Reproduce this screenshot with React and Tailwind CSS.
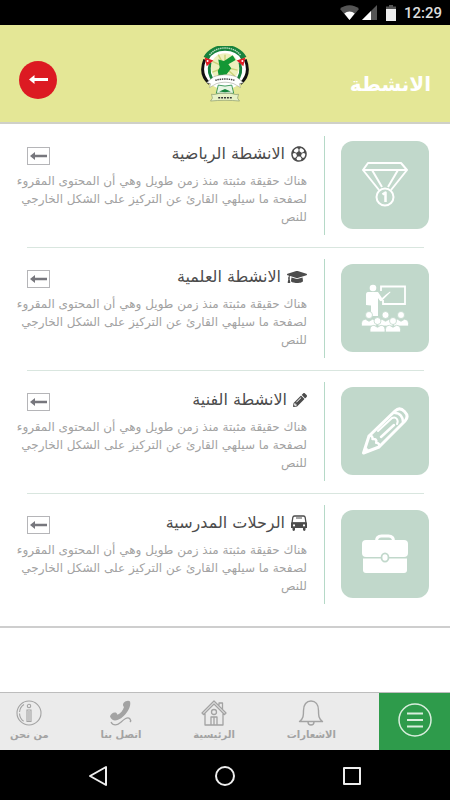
import React from "react";
import { FaRegFutbol, FaGraduationCap, FaPencilAlt } from "react-icons/fa";

function BusIcon() {
  return (
    <svg viewBox="0 0 16 16" className="h-4 w-4" fill="none" aria-hidden="true">
      <path d="M3.500 1h9c1 0 1.500.5 1.700 1.500L15 8H1l.8-5.500C2 1.500 2.500 1 3.500 1z" stroke="currentColor" strokeWidth="1.300" />
      <path d="M5 3h6" stroke="currentColor" strokeWidth="1" />
      <path
        fill="currentColor"
        fillRule="evenodd"
        d="M0 7.500h16V13h-1.500v1.600c0 .8-.5 1.300-1.200 1.300s-1.300-.5-1.300-1.300V13H4v1.600c0 .8-.5 1.300-1.300 1.300s-1.200-.5-1.200-1.300V13H0zM3 9.300a1.100 1.100 0 100 2.200 1.100 1.100 0 000-2.200zM13 9.300a1.100 1.100 0 100 2.200 1.100 1.100 0 000-2.200z"
      />
    </svg>
  );
}

function MedalIcon() {
  return (
    <svg viewBox="0 0 48 48" className="h-12 w-12" fill="none" stroke="currentColor" strokeWidth="2" strokeLinejoin="round" aria-hidden="true">
      <path d="M7 2h33l6 7H2zM2 9l16 20M46 9L30 29M11 9l10 17M37 9L27 26" />
      <circle cx="24" cy="36" r="8.500" />
      <path d="M21.500 33.500l3-2v9.500" strokeWidth="2.500" />
    </svg>
  );
}

function Person({ x, y }) {
  return (
    <g transform={`translate(${x} ${y})`}>
      <circle cx="0" cy="0" r="3.500" />
      <path d="M-7.500 11V8.500c0-2.500 1.500-4 4-4.200l3.500 2 3.500-2c2.500.2 4 1.700 4 4.200V11z" />
    </g>
  );
}

function ClassIcon() {
  return (
    <svg viewBox="0 0 48 48" className="h-12 w-12" fill="currentColor" aria-hidden="true">
      <path d="M20 7V2.500h24V20H22v-4" fill="none" stroke="currentColor" strokeWidth="1.800" />
      <circle cx="12" cy="4" r="3.300" />
      <path d="M7 8h10l4 6 4-3.500 4-3 .5.800-8.500 8.500c-.8.600-1.700.400-2.300-.300L17 14v18h-7V21.500l-5-.500V11c0-2 .700-3 2-3z" />
      <g stroke="#c1d8cb" strokeWidth=".8">
        <Person x={8} y={31} />
        <Person x={24.500} y={31} />
        <Person x={40} y={31} />
        <Person x={16.500} y={37} />
        <Person x={32} y={37} />
      </g>
    </svg>
  );
}

function PencilIcon() {
  return (
    <svg viewBox="0 0 48 48" className="h-12 w-12" fill="none" stroke="currentColor" strokeWidth="3" strokeLinecap="round" strokeLinejoin="round" aria-hidden="true">
      <path d="M2.500 46L8 29 34 4c3-2.800 6.500-2.500 9.500.500s3.300 6.500.500 9.500L18 40z" />
      <path d="M8 29c2-1 4 .500 3.500 3 3-.500 4.500 1 3.700 3.800 2.300 0 3.800 2 2.800 4.200M34 6c5 0 8 4 8 9" strokeWidth="2.500" />
      <path d="M20 30l13-12" strokeWidth="2.500" />
      <path d="M17 24l14-13c4-2 7 2 5 6" strokeWidth="2" />
      <path d="M2.500 46l2-6 4 4z" fill="currentColor" strokeWidth="1" />
    </svg>
  );
}

function BriefcaseIcon() {
  return (
    <svg viewBox="0 0 48 48" className="h-12 w-12" fill="currentColor" aria-hidden="true">
      <path d="M15.500 11c0-3.500 2-5 5-5h7c3 0 5 1.500 5 5" fill="none" stroke="currentColor" strokeWidth="3" />
      <path d="M5 10h38a4 4 0 014 4v9a4 4 0 01-4 4H5a4 4 0 01-4-4v-9a4 4 0 014-4z" />
      <path d="M2 28.500h44V40a3 3 0 01-3 3H5a3 3 0 01-3-3z" />
      <ellipse cx="24" cy="27.500" rx="3.500" ry="4.200" stroke="#c1d8cb" strokeWidth="1.800" />
    </svg>
  );
}

function Emblem() {
  return (
    <svg viewBox="0 0 48 58" className="h-14 w-12" role="img" aria-label="شعار المدرسة">
      <circle cx="24" cy="23" r="22" fill="#fff" />
      <path d="M3 14C-1 24 1 33 8 39" fill="none" stroke="#111" strokeWidth="3" />
      <path d="M45 14c4 10 2 19-5 25" fill="none" stroke="#111" strokeWidth="3" />
      <path d="M9 17C6 26 8 32 13 37M39 17c3 9 1 15-4 20" fill="none" stroke="#16823c" strokeWidth="3" />
      <path d="M4.500 12.500C12-1.500 36-1.500 43.500 12.500" fill="none" stroke="#16823c" strokeWidth="6" />
      <path d="M8 9.500C15-.5 33-.5 40 9.500" fill="none" stroke="#b9dcc0" strokeWidth="1.500" strokeDasharray="1.500 .7" />
      <circle cx="24" cy="22" r="14.500" fill="#eef0bd" />
      <path d="M24 22L11 16M24 22L17 9M24 22V9M24 22l13 3M24 22L11 27M24 22l10 9M24 22L15 33" stroke="#cbd47b" strokeWidth="1.500" />
      <path d="M3 12l9 3-7 6zM45 12l-9 3 7 6z" fill="#e11b23" />
      <circle cx="6" cy="15.500" r="1" fill="#fff" />
      <circle cx="42" cy="15.500" r="1" fill="#fff" />
      <path d="M17 14l6 1.500 9-6 3 5-7.500 4.500 3 4-5 6.500-8 1-1-4.500 2-4z" fill="#149735" />
      <path d="M5 38l7-6c8-3 16-3 24 0l7 6-4 1 1 4-7-4c-6-2-12-2-18 0l-7 4 1-4z" fill="#fff" stroke="#8b9184" strokeWidth=".5" />
      <path d="M14 35.500c6-1.700 14-1.700 20 0" fill="none" stroke="#444" strokeWidth="1.500" strokeDasharray="1.500 .8" />
      <path d="M17 40.500l7 1 7-1 2 8.500H15z" fill="#e8f5e4" stroke="#15843a" strokeWidth=".8" />
      <path d="M18 47l6-2.500 6 2.500-6 1z" fill="#15843a" />
      <path d="M10 50c4 1 6-1 9-1h10c3 0 5 2 9 1l-1 4 2 3c-9-1-21-1-30 0l2-3z" fill="#e7f2c7" stroke="#7c8d67" strokeWidth=".6" />
      <path d="M17 53.500h14" stroke="#333" strokeWidth="1.500" strokeDasharray="2 1" />
    </svg>
  );
}

const activities = [
  { title: "الانشطة الرياضية", Icon: () => <FaRegFutbol className="h-4 w-4" />, Picture: MedalIcon },
  { title: "الانشطة العلمية", Icon: () => <FaGraduationCap className="h-5 w-5" />, Picture: ClassIcon },
  { title: "الانشطة الفنية", Icon: () => <FaPencilAlt className="h-[14px] w-[14px]" />, Picture: PencilIcon },
  { title: "الرحلات المدرسية", Icon: BusIcon, Picture: BriefcaseIcon },
];

function Activity({ title, Icon, Picture }) {
  return (
    <article className="flex pt-3 pr-[21px] pb-3 pl-4">
      <div className="mt-[5px] flex h-[88px] w-[88px] shrink-0 items-center justify-center rounded-xl bg-[#c1d8cb] text-white">
        <Picture />
      </div>
      <div className="mr-4 h-[99px] w-px shrink-0 bg-[#b5d9c7]" />
      <div className="mr-[17px] min-w-0 flex-1">
        <div className="flex h-9 items-center justify-between pl-[11px]">
          <h2 className="flex items-center gap-[6px] text-base text-[#4c4c4c]">
            <Icon />
            {title}
          </h2>
          <button type="button" aria-label={title} className="mt-1 flex h-[18px] w-[23px] items-center justify-center border border-[#b5b5b8] text-[#77777d]">
            <svg viewBox="0 0 17 8" className="h-2 w-[17px]" fill="currentColor" aria-hidden="true">
              <path d="M0 4l5-4v2.800h12v2.400H5V8z" />
            </svg>
          </button>
        </div>
        <p className="text-xs leading-[18px] whitespace-nowrap text-[#a2a2a2]">
          هناك حقيقة مثبتة منذ زمن طويل وهي أن المحتوى المقروء
          <br />
          لصفحة ما سيلهي القارئ عن التركيز على الشكل الخارجي
          <br />
          للنص
        </p>
      </div>
    </article>
  );
}

function BellIcon() {
  return (
    <svg viewBox="0 0 26 26" className="h-[26px] w-[26px]" fill="none" stroke="currentColor" strokeWidth="1.400" strokeLinejoin="round" aria-hidden="true">
      <path d="M1.500 21.500c4-3 4-6 4-11 0-6 3-9.500 7.500-9.500s7.500 3.500 7.500 9.500c0 5 0 8 4 11zM10 22c0 4 6 4 6 0" />
    </svg>
  );
}

function HomeIcon() {
  return (
    <svg viewBox="0 0 26 26" className="h-[26px] w-[26px]" fill="none" stroke="currentColor" strokeWidth="1.300" strokeLinejoin="round" aria-hidden="true">
      <path d="M1 13L13 1l12 12-1.500 1.500L13 4 2.500 14.500zM4 13v12h18V13M18 6V3h3.500v6.500M10 25v-8h6v8M13 17v8" />
      <circle cx="13" cy="12" r="2.500" />
    </svg>
  );
}

function PhoneIcon() {
  return (
    <svg viewBox="0 0 26 26" className="h-[26px] w-[26px]" fill="currentColor" aria-hidden="true">
      <path d="M15.500 3c2-2.500 5.500-3 6.500-1.500 2 6-6.500 18.500-15 19-2 0-4-1.500-5-4 .500-2.500 4-5 6.500-3.500l1 1.800c3-1.300 5.500-4.500 6.500-7.800-1-.700-1.500-2.500-.500-4z" />
      <path d="M3 22c2 4 6 3.500 9.500.500 3-2.700 7-6.500 9.500-3.500 1 1.200.500 2.500 0 3" fill="none" stroke="currentColor" strokeWidth="1.300" />
    </svg>
  );
}

function InfoIcon() {
  return (
    <svg viewBox="0 0 26 26" className="h-[26px] w-[26px]" fill="none" stroke="currentColor" strokeWidth="1.100" aria-hidden="true">
      <circle cx="13" cy="13" r="12" />
      <path d="M8 4.500C2 8 2 18 8 21.500" strokeDasharray="9 1.500" />
      <circle cx="13" cy="6" r="1.700" />
      <path d="M11 10h4v11.500h-4zM13 11v10" />
    </svg>
  );
}

const tabs = [
  { label: "الاشعارات", Icon: BellIcon },
  { label: "الرئيسية", Icon: HomeIcon },
  { label: "اتصل بنا", Icon: PhoneIcon },
  { label: "من نحن", Icon: InfoIcon },
];

export default function App() {
  return (
    <div dir="rtl" className="flex min-h-screen flex-col bg-white font-['DejaVu_Sans',sans-serif]">
      <div dir="ltr" className="flex h-[25px] items-center justify-end bg-black pr-2 text-white">
        <svg viewBox="0 0 19 15" className="h-[15px] w-[19px]" aria-hidden="true">
          <path d="M0 4C5-1 14-1 19 4l-9.500 11z" fill="#555" />
          <path d="M4.300 8.500c3-2.800 7.400-2.800 10.400 0L9.500 15z" fill="#fff" />
        </svg>
        <svg viewBox="0 0 15 15" className="ml-[3px] h-[15px] w-[15px]" aria-hidden="true">
          <path d="M15 0v15H0z" fill="#555" />
          <path d="M9 6v9H0z" fill="#fff" />
        </svg>
        <svg viewBox="0 0 10 16" className="ml-[9px] h-4 w-[10px]" aria-hidden="true">
          <path d="M3 0h4v1.500h3V4H0V1.500h3z" fill="#555" />
          <path d="M0 4h10v12H0z" fill="#eee" />
        </svg>
        <span className="ml-2 font-[Roboto,sans-serif] text-[15px] leading-6 font-medium text-[#ddd]">12:29</span>
      </div>

      <header className="grid h-[99px] grid-cols-[1fr_auto_1fr] items-center border-b-2 border-[#cfd0c8] bg-[#e4e796] pr-[19px] pl-[19px]">
        <h1 className="pt-5 text-xl font-bold text-white">الانشطة</h1>
        <Emblem />
        <button type="button" aria-label="رجوع" className="mt-3 flex h-[38px] w-[38px] items-center justify-center justify-self-end rounded-full bg-[#dc1a22] text-white">
          <svg viewBox="0 0 19 9" className="h-[9px] w-[19px]" fill="currentColor" aria-hidden="true">
            <path d="M0 4.500L5.500 0v3H19v3H5.500v3z" />
          </svg>
        </button>
      </header>

      <main className="flex-1">
        <div className="border-b-2 border-[#cecece] pb-[10px]">
          {activities.map((activity, index) => (
            <React.Fragment key={activity.title}>
              {index > 0 && <hr className="mr-[26px] ml-[27px] -mb-px border-t border-[#d9e6df]" />}
              <Activity {...activity} />
            </React.Fragment>
          ))}
        </div>
      </main>

      <footer>
        <nav className="flex h-[58px] border-t border-[#bdbdbd] bg-[#ebebeb]">
          <button type="button" aria-label="القائمة" className="flex w-[71px] shrink-0 items-center justify-center bg-[#2e9b4b] pb-1 text-[#d8eedd]">
            <svg viewBox="0 0 34 34" className="h-[34px] w-[34px]" fill="none" stroke="currentColor" strokeWidth="1.500" aria-hidden="true">
              <circle cx="17" cy="17" r="16" />
              <path d="M9 10.500h16M9 17h16M9 23.500h16" strokeWidth="2" />
            </svg>
          </button>
          <div className="flex flex-1 items-start justify-between pt-[7px] pr-[43px] pl-[10px] text-[#a3a3a3]">
            {tabs.map(({ label, Icon }) => (
              <button key={label} type="button" className="flex flex-col items-center">
                <Icon />
                <span className="text-[10px] leading-[18px] font-bold">{label}</span>
              </button>
            ))}
          </div>
        </nav>
        <div dir="ltr" className="flex h-[50px] items-center justify-center gap-[107px] bg-black pt-[2px] text-[#eee]">
          <svg viewBox="0 0 20 22" className="h-[22px] w-5" fill="none" stroke="currentColor" strokeWidth="2" strokeLinejoin="round" aria-hidden="true">
            <path d="M18 2v18L2 11z" />
          </svg>
          <svg viewBox="0 0 20 20" className="h-5 w-5" fill="none" stroke="currentColor" strokeWidth="2" aria-hidden="true">
            <circle cx="10" cy="10" r="9" />
          </svg>
          <svg viewBox="0 0 20 20" className="h-5 w-5" fill="none" stroke="currentColor" strokeWidth="2" aria-hidden="true">
            <path d="M2 2h16v16H2z" strokeLinejoin="round" />
          </svg>
        </div>
      </footer>
    </div>
  );
}
